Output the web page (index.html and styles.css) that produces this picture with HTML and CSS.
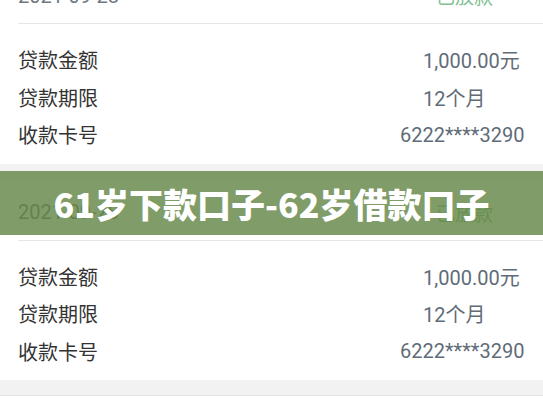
FILE: index.html
```html
<!DOCTYPE html>
<html lang="zh-CN">
<head>
    <meta charset="UTF-8">
    <meta name="viewport" content="width=device-width, initial-scale=1.0">
    <title>61岁下款口子-62岁借款口子</title>
    <link rel="stylesheet" href="styles.css">
</head>
<body>
    <div class="list">
        <!-- Loan record 1 -->
        <div class="card">
            <div class="card-head">
                <span class="date">2021-09-28</span>
                <span class="status">已放款</span>
            </div>
            <div class="card-body">
                <div class="row"><span class="label">贷款金额</span><span class="value">1,000.00元</span></div>
                <div class="row"><span class="label">贷款期限</span><span class="value">12个月</span></div>
                <div class="row"><span class="label">收款卡号</span><span class="value value-card">6222****3290</span></div>
            </div>
        </div>

        <!-- Loan record 2 -->
        <div class="card">
            <div class="card-head">
                <span class="date">2021-09-28</span>
                <span class="status">已放款</span>
            </div>
            <div class="card-body">
                <div class="row"><span class="label">贷款金额</span><span class="value">1,000.00元</span></div>
                <div class="row"><span class="label">贷款期限</span><span class="value">12个月</span></div>
                <div class="row"><span class="label">收款卡号</span><span class="value value-card">6222****3290</span></div>
            </div>
        </div>

        <div class="card card-next"></div>
    </div>

    <!-- Title banner laid over the list -->
    <div class="banner">
        <h1>61岁下款口子-62岁借款口子</h1>
    </div>
</body>
</html>
```

FILE: styles.css
```css
/* Page styling */
body {
    font-family: Roboto, "Noto Sans CJK SC", sans-serif;
    background: #f2f2f2;
    margin: 0;
    overflow: hidden;
}

/* List of loan records, scrolled up a little */
.list {
    display: flex;
    flex-direction: column;
    gap: 15px;
    margin-top: -38px;
}

.card {
    background: #fff;
    padding-left: 18px;
}

.card-next {
    height: 40px;
    border-top: 1px solid #e2e2e2;
}

/* Date and status line */
.card-head {
    display: flex;
    justify-content: space-between;
    align-items: center;
    height: 62px;
    padding-top: 6px;
    box-sizing: border-box;
    border-bottom: 1px solid #e6e6e6;
    padding-right: 50px;
}

.date {
    font-size: 20px;
    color: #6f7780;
}

.status {
    font-size: 19px;
    color: #80c293;
}

/* Label / value rows */
.card-body {
    padding: 17px 0 10px;
}

.row {
    display: flex;
    align-items: center;
    height: 37.5px;
}

.label {
    font-size: 20px;
    color: #333;
    width: 382px;
}

.value {
    font-size: 20px;
    color: #5f6c78;
    width: 122px;
    padding-left: 23px;
    box-sizing: border-box;
}

.value-card {
    padding-left: 0;
    text-align: right;
}

/* Headline banner */
.banner {
    position: absolute;
    top: 171px;
    left: 0;
    right: 0;
    height: 64px;
    background: rgba(96, 131, 66, 0.8);
    display: flex;
    align-items: center;
    justify-content: center;
}

.banner h1 {
    margin: 0;
    font-family: "Noto Sans CJK SC", sans-serif;
    font-size: 34px;
    font-weight: 900;
    color: #fff;
}
```
